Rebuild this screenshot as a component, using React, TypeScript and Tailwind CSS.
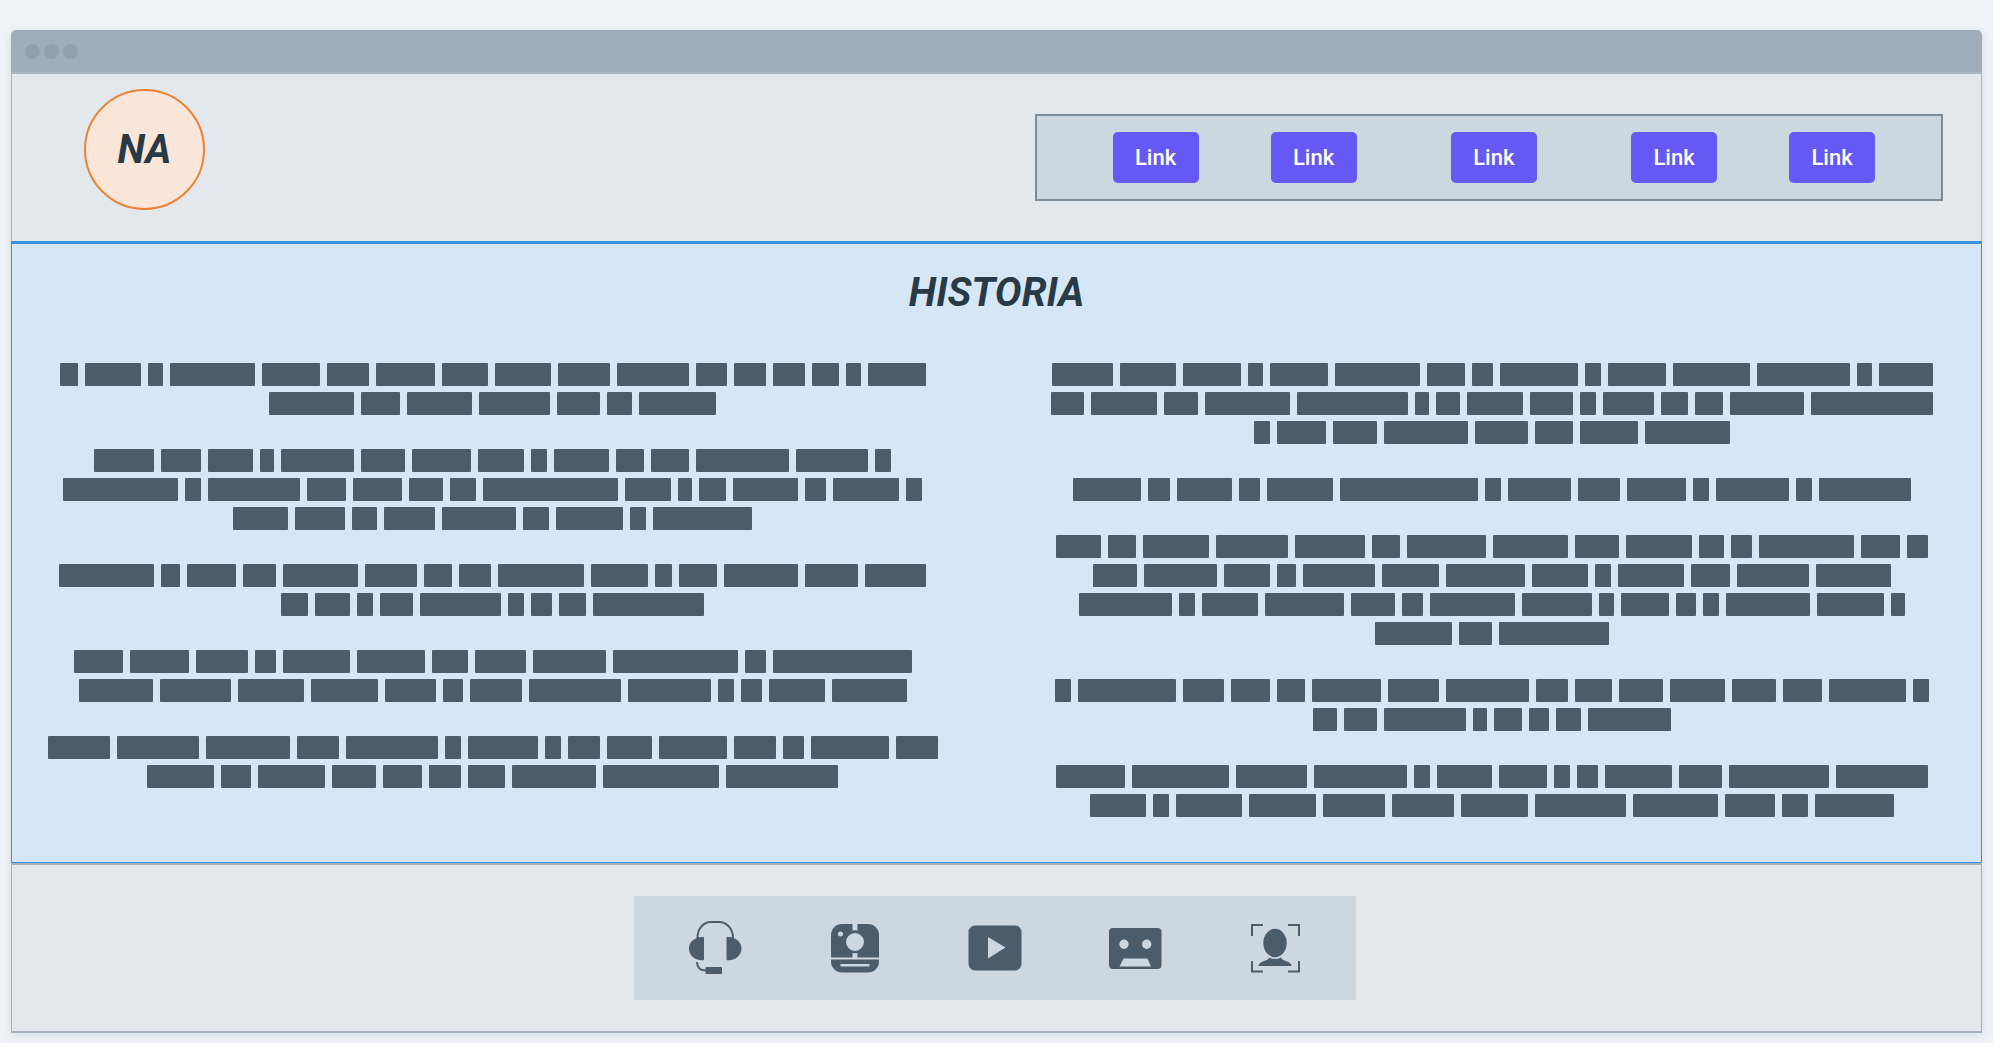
import type { ReactNode } from "react";

const WORD_GAP = 7;

/* Each line lists where its words begin; the last entry is where the next word would begin. */
type Line = number[];
type Paragraph = Line[];

const leftColumn: Paragraph[] = [
  [
    [59, 84, 147, 169, 261, 326, 375, 441, 494, 557, 616, 695, 733, 772, 811, 845, 867, 932],
    [269, 361, 407, 479, 557, 607, 639, 723],
  ],
  [
    [94, 161, 208, 260, 281, 361, 412, 478, 531, 554, 616, 651, 696, 796, 875, 898],
    [63, 185, 208, 307, 353, 409, 450, 483, 625, 678, 699, 733, 805, 833, 906, 929],
    [233, 295, 352, 384, 442, 523, 556, 630, 653, 759],
  ],
  [
    [59, 161, 187, 243, 283, 365, 424, 459, 498, 591, 655, 679, 724, 805, 865, 933],
    [281, 315, 357, 380, 420, 508, 531, 559, 593, 711],
  ],
  [
    [73, 129, 195, 254, 282, 356, 431, 474, 532, 612, 744, 772, 918],
    [78, 159, 237, 310, 384, 442, 469, 528, 627, 717, 740, 768, 831, 913],
  ],
  [
    [49, 118, 207, 298, 348, 447, 470, 547, 570, 609, 661, 736, 785, 813, 898, 947],
    [147, 221, 258, 332, 383, 429, 468, 512, 603, 726, 845],
  ],
];

const rightColumn: Paragraph[] = [
  [
    [1052, 1120, 1183, 1248, 1270, 1335, 1427, 1472, 1500, 1585, 1608, 1673, 1757, 1857, 1879, 1940],
    [1051, 1091, 1164, 1205, 1297, 1415, 1436, 1467, 1530, 1580, 1603, 1661, 1695, 1730, 1811, 1940],
    [1254, 1277, 1333, 1384, 1475, 1535, 1580, 1645, 1737],
  ],
  [[1073, 1148, 1177, 1239, 1267, 1340, 1485, 1508, 1578, 1627, 1693, 1716, 1796, 1819, 1918]],
  [
    [1056, 1108, 1143, 1216, 1295, 1372, 1407, 1493, 1575, 1626, 1699, 1731, 1759, 1861, 1907, 1935],
    [1093, 1144, 1224, 1277, 1303, 1382, 1446, 1532, 1595, 1618, 1691, 1737, 1816, 1898],
    [1079, 1179, 1202, 1265, 1351, 1402, 1430, 1522, 1599, 1621, 1676, 1703, 1726, 1817, 1891, 1912],
    [1375, 1459, 1499, 1616],
  ],
  [
    [1055, 1078, 1183, 1231, 1277, 1312, 1388, 1446, 1536, 1575, 1619, 1670, 1732, 1783, 1829, 1913, 1936],
    [1313, 1344, 1384, 1473, 1494, 1529, 1556, 1588, 1678],
  ],
  [
    [1056, 1132, 1236, 1314, 1414, 1437, 1499, 1554, 1577, 1605, 1679, 1729, 1836, 1935],
    [1090, 1153, 1176, 1249, 1323, 1392, 1461, 1535, 1633, 1725, 1782, 1815, 1901],
  ],
];

function TextLine({ stops }: { stops: Line }) {
  return (
    <div className="flex justify-center gap-[7px]">
      {stops.slice(0, -1).map((start, i) => (
        <span
          key={start}
          className="h-[23px] rounded-[1px] bg-[#4b5d6b]"
          style={{ width: stops[i + 1] - start - WORD_GAP }}
        />
      ))}
    </div>
  );
}

function TextColumn({ paragraphs }: { paragraphs: Paragraph[] }) {
  return (
    <div className="flex min-w-0 flex-col gap-[34px]">
      {paragraphs.map((lines, i) => (
        <div key={i} className="flex flex-col gap-1.5">
          {lines.map((stops, j) => (
            <TextLine key={j} stops={stops} />
          ))}
        </div>
      ))}
    </div>
  );
}

function NavLink() {
  return (
    <a
      href="#"
      className="flex h-[51px] w-[86px] items-center justify-center rounded-[5px] bg-[#6658f5] text-[22px] font-medium text-white"
    >
      Link
    </a>
  );
}

function Icon({ label, children }: { label: string; children: ReactNode }) {
  return (
    <svg role="img" aria-label={label} viewBox="0 0 56 56" className="size-14 text-[#4b5d6b]" fill="currentColor">
      {children}
    </svg>
  );
}

function HeadsetIcon() {
  return (
    <Icon label="Headset">
      <path
        d="M10.5 18C10.5 9 16 2 24 2h8c8 0 14 7 14 16"
        fill="none"
        stroke="currentColor"
        strokeWidth="2"
      />
      <path d="M17 18v21a1.500 1.500 0 0 1-2 1.300C7 40 2 35 2 28.500S7 17.500 15 17a1.500 1.500 0 0 1 2 1z" />
      <path d="M39.500 18v21a1.500 1.500 0 0 0 2 1.300C49 40 54.500 35 54.500 28.500S49 17.500 41.500 17a1.500 1.500 0 0 0-2 1z" />
      <path d="M10 42c0 6 3.500 8.500 9 8.500" fill="none" stroke="currentColor" strokeWidth="2" />
      <rect x="18.500" y="47" width="16.500" height="7" rx="1" />
    </Icon>
  );
}

function CameraIcon() {
  return (
    <Icon label="Instant camera">
      <path
        fillRule="evenodd"
        d="M15 4h10.500v6.500a12 12 0 0 1 5 0V4H41a11 11 0 0 1 11 11v22.500H30.500V33a12 12 0 0 1-5 0v4.500H4V15A11 11 0 0 1 15 4zM28 13a9 9 0 1 0 0 18a9 9 0 0 0 0-18zM13.500 11.500a2.500 2.500 0 1 0 0 5a2.500 2.500 0 0 0 0-5z"
      />
      <path
        fillRule="evenodd"
        d="M4 39.500h48v2a11 11 0 0 1-11 11H15a11 11 0 0 1-11-11zM14.500 44a1 1 0 0 0 0 2.500h27a1 1 0 0 0 0-2.500z"
      />
    </Icon>
  );
}

function VideoIcon() {
  return (
    <Icon label="Video">
      <path
        fillRule="evenodd"
        d="M8 5.500h40a6.500 6.500 0 0 1 6.500 6.500v32a6.500 6.500 0 0 1-6.500 6.500H8A6.500 6.500 0 0 1 1.500 44V12A6.500 6.500 0 0 1 8 5.500zM21 17v21.500L38.500 27.500z"
      />
    </Icon>
  );
}

function TapeIcon() {
  return (
    <Icon label="Cassette">
      <path
        fillRule="evenodd"
        d="M6 8h44.500a4 4 0 0 1 4 4v33a4 4 0 0 1-4 4H6a4 4 0 0 1-4-4V12a4 4 0 0 1 4-4zM17 19.500a4.700 4.700 0 1 0 0 9.400a4.700 4.700 0 0 0 0-9.400zM39.700 19.500a4.700 4.700 0 1 0 0 9.400a4.700 4.700 0 0 0 0-9.400zM16.500 38.500L12.500 46.500h31.500L40.500 38.500z"
      />
    </Icon>
  );
}

function FaceIcon() {
  return (
    <Icon label="Face recognition">
      <path
        d="M5 16V5h11M41 5h11v11M52 41v10.500H41M16 51.500H5V41"
        fill="none"
        stroke="currentColor"
        strokeWidth="2"
      />
      <ellipse cx="28" cy="23" rx="11.700" ry="14.200" />
      <path d="M22 37.500c4 2 8 2 12 0c.5 4 10.500 3 10.500 8.500h-33c0-5.500 10-4.500 10.500-8.500z" />
    </Icon>
  );
}

export default function App() {
  return (
    <div className="min-h-screen bg-[#eff3f7] px-[11px] pt-[30px] pb-2.5 font-['Roboto',sans-serif] text-[#293a47]">
      <div className="rounded-t-[5px] border-b-2 border-[#a3b1bf] shadow-[0_2px_8px_rgba(90,110,130,0.18)]">
        <div className="flex h-11 items-center gap-1 rounded-t-[5px] border-b-2 border-[#abb8c3] bg-[#9eadb9] px-3.5">
          <span className="size-[15px] rounded-full bg-[#8fa0ae]" />
          <span className="size-[15px] rounded-full bg-[#8fa0ae]" />
          <span className="size-[15px] rounded-full bg-[#8fa0ae]" />
        </div>

        <header className="flex items-start justify-between border-x border-[#a9b6c2] bg-[#e2e8ec] pt-[15px] pr-[38px] pb-[31px] pl-[72px]">
          <div className="flex size-[121px] items-center justify-center rounded-full border-2 border-[#ec8235] bg-[#f9e6d9] text-[40px] font-bold italic">
            NA
          </div>
          <nav className="mt-[25px] flex w-[calc(50%-21px)] justify-between border-2 border-[#7a8c9a] bg-[#cdd7e0] py-4 pr-[66px] pl-[76px]">
            <div className="flex gap-[72px]">
              <NavLink />
              <NavLink />
            </div>
            <NavLink />
            <div className="flex gap-[72px]">
              <NavLink />
              <NavLink />
            </div>
          </nav>
        </header>

        <main className="border border-t-3 border-[#3a90de] bg-[#d5e6f7] pt-[25px] pb-[45px]">
          <h1 className="text-center text-[40px] leading-12 font-bold italic">HISTORIA</h1>
          <div className="mt-[46px] grid grid-cols-2 gap-[110px] pr-11 pl-9">
            <TextColumn paragraphs={leftColumn} />
            <TextColumn paragraphs={rightColumn} />
          </div>
        </main>

        <footer className="flex justify-center border-x border-t-2 border-[#a3b1bc] bg-[#e2e8ec] pt-[31px] pr-[3px] pb-[31px]">
          <div className="flex gap-[84px] bg-[#cdd7e0] px-[53px] py-6">
            <HeadsetIcon />
            <CameraIcon />
            <VideoIcon />
            <TapeIcon />
            <FaceIcon />
          </div>
        </footer>
      </div>
    </div>
  );
}
